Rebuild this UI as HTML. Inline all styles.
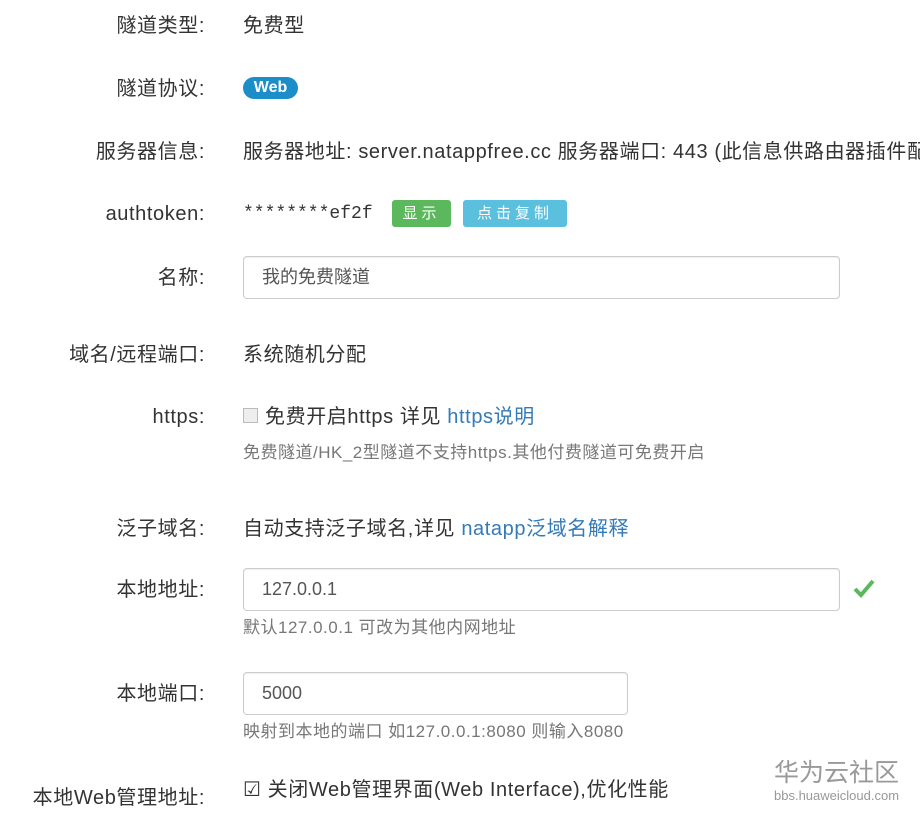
<!DOCTYPE html>
<html><head><meta charset="utf-8"><style>
body{margin:0;width:920px;height:821px;background:#fff;font-family:"Liberation Sans","Noto Sans CJK SC",sans-serif;color:#333;position:relative;overflow:hidden}
.a{position:absolute;white-space:nowrap;line-height:24px}
.l{right:715px;text-align:right;font-size:20px;letter-spacing:0.6px}
.v{left:243px;font-size:20px;letter-spacing:0.6px}
.h{left:243px;font-size:17px;letter-spacing:0.5px;color:#777}
.in{position:absolute;left:243px;border:1px solid #ccc;border-radius:4px;box-sizing:border-box;height:43px;font-size:18px;line-height:41px;padding-left:18px;color:#555;box-shadow:inset 0 1px 1px rgba(0,0,0,.075)}
a{color:#337ab7;text-decoration:none}
</style></head><body>
<div class="a l" style="top:14px">隧道类型:</div><div class="a v" style="top:14px">免费型</div>
<div class="a l" style="top:77px">隧道协议:</div>
<div class="a" style="left:243px;top:77px;width:55px;height:22px;background:#1b8dc9;color:#fff;border-radius:11px;font-weight:bold;font-size:16px;line-height:22px;text-align:center">Web</div>
<div class="a l" style="top:140px">服务器信息:</div><div class="a v" style="top:140px">服务器地址: server.natappfree.cc 服务器端口: 443 (此信息供路由器插件配置)</div>
<div class="a l" style="top:202px">authtoken:</div>
<div class="a v" style="top:202px;font-family:'Liberation Mono',monospace;font-size:18px;letter-spacing:0">********ef2f</div>
<div class="a" style="left:392px;top:200px;width:59px;height:27px;background:#5cb85c;color:#fff;border-radius:3px;font-size:15px;line-height:27px;text-align:center;letter-spacing:4px">显示</div>
<div class="a" style="left:463px;top:200px;width:104px;height:27px;background:#5bc0de;color:#fff;border-radius:3px;font-size:15px;line-height:27px;text-align:center;letter-spacing:4px">点击复制</div>
<div class="a l" style="top:266px">名称:</div>
<div class="in" style="top:256px;width:597px">我的免费隧道</div>
<div class="a l" style="top:343px">域名/远程端口:</div><div class="a v" style="top:343px">系统随机分配</div>
<div class="a l" style="top:405px">https:</div>
<div class="a" style="left:243px;top:408px;width:15px;height:15px;border:1px solid #bbb;background:#eee;box-sizing:border-box"></div>
<div class="a v" style="left:265px;top:405px">免费开启https 详见 <a>https说明</a></div>
<div class="a h" style="top:441px">免费隧道/HK_2型隧道不支持https.其他付费隧道可免费开启</div>
<div class="a l" style="top:517px">泛子域名:</div><div class="a v" style="top:517px">自动支持泛子域名,详见 <a>natapp泛域名解释</a></div>
<div class="a l" style="top:578px">本地地址:</div>
<div class="in" style="top:568px;width:597px">127.0.0.1</div>
<svg class="a" style="left:853px;top:578px" width="22" height="20" viewBox="0 0 22 20"><path d="M2 11 L8 17 L20 3" stroke="#5cb85c" stroke-width="4" fill="none"/></svg>
<div class="a h" style="top:616px">默认127.0.0.1 可改为其他内网地址</div>
<div class="a l" style="top:682px">本地端口:</div>
<div class="in" style="top:672px;width:385px">5000</div>
<div class="a h" style="top:720px">映射到本地的端口 如127.0.0.1:8080 则输入8080</div>
<div class="a l" style="top:786px">本地Web管理地址:</div>
<div class="a v" style="top:778px">☑ 关闭Web管理界面(Web Interface),优化性能</div>
<div class="a" style="left:774px;top:758px;font-size:25px;color:#999;line-height:30px">华为云社区</div>
<div class="a" style="left:774px;top:789px;font-size:13px;color:#999;line-height:14px">bbs.huaweicloud.com</div>
</body></html>
